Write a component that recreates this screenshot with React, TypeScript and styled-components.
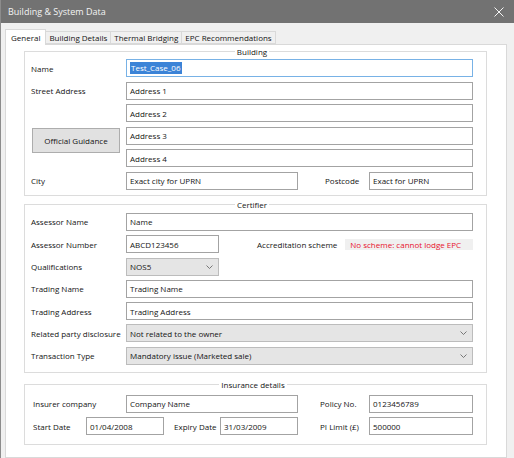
import styled, { createGlobalStyle } from "styled-components";

const GlobalStyle = createGlobalStyle`
  html, body {
    margin: 0;
    padding: 0;
    background: #f0f0f0;
  }
  body {
    font-family: "Open Sans", "Liberation Sans", sans-serif;
  }
  * {
    box-sizing: border-box;
  }
`;

const Window = styled.div`
  width: 514px;
  height: 458px;
  overflow: hidden;
  display: flex;
  flex-direction: column;
  background: #f0f0f0;
  border-left: 1px solid #8c8c8c;
  font-size: 8px;
  color: #141414;
`;

const TitleBar = styled.div`
  height: 23px;
  flex: none;
  background: #727272;
  color: #f4f4f4;
  display: flex;
  align-items: center;
  justify-content: space-between;
  padding: 0 10px 0 7px;
  font-size: 9px;
`;

const Body = styled.div`
  flex: 1;
  display: flex;
  flex-direction: column;
  padding: 6px 7px 0 4px;
  min-height: 0;
`;

const TabStrip = styled.div`
  height: 15px;
  flex: none;
  display: flex;
  align-items: flex-end;
`;

const Tab = styled.div<{ $active?: boolean }>`
  height: ${(p) => (p.$active ? 16 : 13)}px;
  margin-bottom: ${(p) => (p.$active ? -1 : 0)}px;
  margin-left: -1px;
  padding: ${(p) => (p.$active ? "0 5px 1px" : "0 3px")};
  display: flex;
  align-items: center;
  border: 1px solid #d9d9d9;
  border-bottom: ${(p) => (p.$active ? "none" : "1px solid #d9d9d9")};
  background: ${(p) => (p.$active ? "#fff" : "#f0f0f0")};
  position: relative;
  z-index: ${(p) => (p.$active ? 1 : 0)};
  white-space: nowrap;
  &:first-child {
    margin-left: 0;
  }
`;

const Panel = styled.div`
  flex: 1;
  background: #fff;
  border: 1px solid #d9d9d9;
  padding: 1px 19px 0 18px;
  display: flex;
  flex-direction: column;
`;

const Group = styled.fieldset<{ $top: number; $pad: string }>`
  margin: ${(p) => p.$top}px 0 0;
  padding: ${(p) => p.$pad};
  border: 1px solid #dcdcdc;
  min-width: 0;
`;

const Legend = styled.legend`
  margin: 0 auto;
  padding: 0 2px;
  line-height: 11px;
`;

const FormGrid = styled.div<{ $gap: number }>`
  display: grid;
  grid-template-columns: 95px 1fr;
  grid-auto-rows: 18px;
  row-gap: ${(p) => p.$gap}px;
  align-items: center;
`;

const Label = styled.span<{ $w?: number; $ml?: number }>`
  white-space: nowrap;
  flex: none;
  ${(p) => (p.$w ? `width: ${p.$w}px;` : "")}
  ${(p) => (p.$ml ? `margin-left: ${p.$ml}px;` : "")}
`;

const TextBox = styled.div<{ $w?: number; $focus?: boolean }>`
  height: 18px;
  ${(p) => (p.$w ? `width: ${p.$w}px; flex: none;` : "")}
  border: 1px solid ${(p) => (p.$focus ? "#78b2e6" : "#a3a3a3")};
  background: #fff;
  padding: 0 3px;
  display: flex;
  align-items: center;
  white-space: nowrap;
  overflow: hidden;
`;

const Selected = styled.span`
  background: #3b83d7;
  color: #fff;
  line-height: 12px;
  padding: 0 1px;
`;

const DropDown = styled.div<{ $w?: number }>`
  height: 18px;
  ${(p) => (p.$w ? `width: ${p.$w}px; flex: none;` : "")}
  border: 1px solid #bcbcbc;
  background: #e5e5e5;
  padding: 0 5px 0 3px;
  display: flex;
  align-items: center;
  justify-content: space-between;
  white-space: nowrap;
`;

const GuidanceButton = styled.div`
  grid-row: span 2;
  align-self: start;
  margin: 1px 0 0 1px;
  width: 88px;
  height: 25px;
  background: #e1e1e1;
  border: 1px solid #adadad;
  display: flex;
  align-items: center;
  justify-content: center;
`;

const InlineRow = styled.div`
  display: flex;
  align-items: center;
  height: 18px;
`;

const Notice = styled.div`
  flex: 1;
  height: 11px;
  margin-left: 8px;
  padding-left: 5px;
  background: #f0f0f0;
  color: #e8112d;
  display: flex;
  align-items: center;
  white-space: nowrap;
`;

const InsuranceRows = styled.div`
  display: flex;
  flex-direction: column;
  gap: 4.3px;
`;

const Chevron = () => (
  <svg width="7" height="4" viewBox="0 0 7 4">
    <path d="M0.5 0.5 L3.5 3.5 L6.5 0.5" fill="none" stroke="#6a6a6a" strokeWidth="0.9" />
  </svg>
);

const CloseIcon = () => (
  <svg width="10" height="10" viewBox="0 0 10 10">
    <path d="M0.5 0.5 L9.5 9.5 M9.5 0.5 L0.5 9.5" stroke="#f4f4f4" strokeWidth="1" />
  </svg>
);

function App() {
  return (
    <Window>
      <GlobalStyle />
      <TitleBar>
        <span>Building &amp; System Data</span>
        <CloseIcon />
      </TitleBar>
      <Body>
        <TabStrip>
          <Tab $active>General</Tab>
          <Tab>Building Details</Tab>
          <Tab>Thermal Bridging</Tab>
          <Tab>EPC Recommendations</Tab>
        </TabStrip>
        <Panel>
          <Group $top={0} $pad="2px 13px 5px 6px">
            <Legend>Building</Legend>
            <FormGrid $gap={4.6}>
              <Label>Name</Label>
              <TextBox $focus>
                <Selected>Test_Case_06</Selected>
              </TextBox>
              <Label>Street Address</Label>
              <TextBox>Address 1</TextBox>
              <span />
              <TextBox>Address 2</TextBox>
              <GuidanceButton>Official Guidance</GuidanceButton>
              <TextBox>Address 3</TextBox>
              <TextBox>Address 4</TextBox>
              <Label>City</Label>
              <InlineRow>
                <TextBox $w={172}>Exact city for UPRN</TextBox>
                <Label $ml={27}>Postcode</Label>
                <span style={{ flex: 1 }} />
                <TextBox $w={104}>Exact for UPRN</TextBox>
              </InlineRow>
            </FormGrid>
          </Group>

          <Group $top={3} $pad="3px 13px 7px 6px">
            <Legend>Certifier</Legend>
            <FormGrid $gap={4.3}>
              <Label>Assessor Name</Label>
              <TextBox>Name</TextBox>
              <Label>Assessor Number</Label>
              <InlineRow>
                <TextBox $w={93}>ABCD123456</TextBox>
                <Label $ml={38}>Accreditation scheme</Label>
                <Notice>No scheme: cannot lodge EPC</Notice>
              </InlineRow>
              <Label>Qualifications</Label>
              <InlineRow>
                <DropDown $w={93}>
                  NOS5
                  <Chevron />
                </DropDown>
              </InlineRow>
              <Label>Trading Name</Label>
              <TextBox>Trading Name</TextBox>
              <Label>Trading Address</Label>
              <TextBox>Trading Address</TextBox>
              <Label>Related party disclosure</Label>
              <DropDown>
                Not related to the owner
                <Chevron />
              </DropDown>
              <Label>Transaction Type</Label>
              <DropDown>
                Mandatory issue (Marketed sale)
                <Chevron />
              </DropDown>
            </FormGrid>
          </Group>

          <Group $top={6} $pad="5px 13px 9px 8px">
            <Legend>Insurance details</Legend>
            <InsuranceRows>
              <InlineRow>
                <Label $w={93}>Insurer company</Label>
                <TextBox $w={172}>Company Name</TextBox>
                <Label $w={49} $ml={22}>Policy No.</Label>
                <TextBox $w={104}>0123456789</TextBox>
              </InlineRow>
              <InlineRow>
                <Label $w={53}>Start Date</Label>
                <TextBox $w={78}>01/04/2008</TextBox>
                <Label $w={46} $ml={10}>Expiry Date</Label>
                <TextBox $w={78}>31/03/2009</TextBox>
                <Label $w={49} $ml={22}>PI Limit (£)</Label>
                <TextBox $w={104}>500000</TextBox>
              </InlineRow>
            </InsuranceRows>
          </Group>
        </Panel>
      </Body>
    </Window>
  );
}

export default App;
